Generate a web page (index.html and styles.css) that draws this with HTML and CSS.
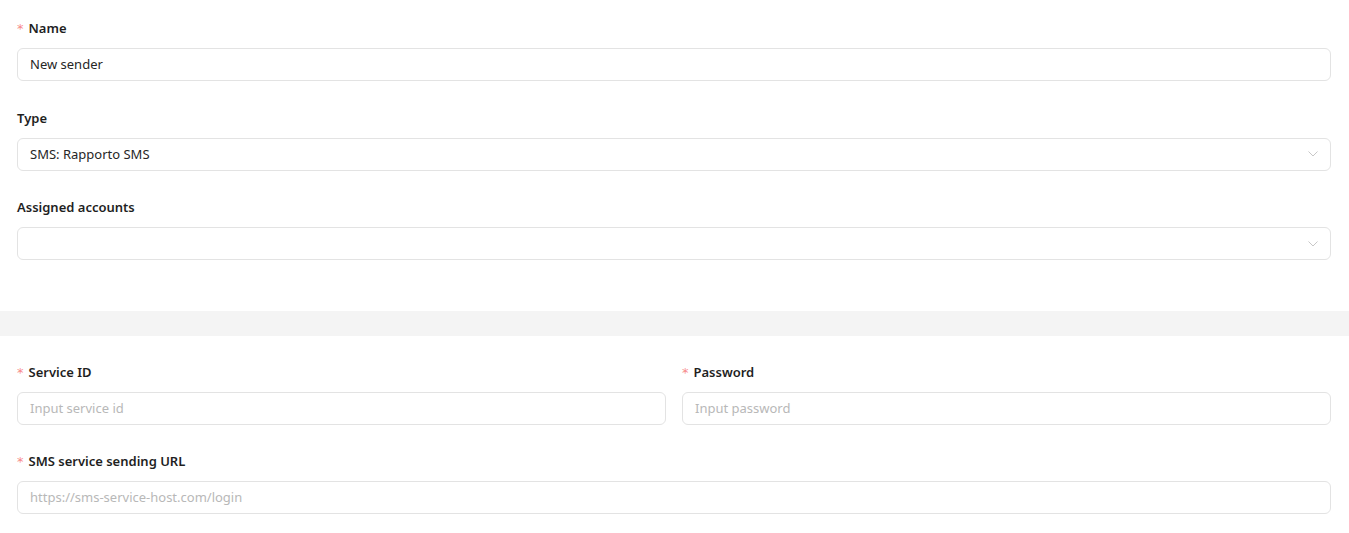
FILE: index.html
```html
<!DOCTYPE html>
<html>
<head>
<meta charset="utf-8">
<link rel="stylesheet" href="styles.css">
</head>
<body>
<form class="form">
  <section class="section section-top">
    <div class="field">
      <label class="label"><span class="req">*</span>Name</label>
      <div class="input"><span class="value">New sender</span></div>
    </div>
    <div class="field">
      <label class="label">Type</label>
      <div class="input select"><span class="value">SMS: Rapporto SMS</span>
        <svg class="chev" width="12" height="8" viewBox="0 0 12 8"><path d="M1.5 1.5 L6 6 L10.5 1.5" fill="none" stroke="#c8c8c8" stroke-width="1"/></svg>
      </div>
    </div>
    <div class="field last">
      <label class="label">Assigned accounts</label>
      <div class="input select"><span class="value"></span>
        <svg class="chev" width="12" height="8" viewBox="0 0 12 8"><path d="M1.5 1.5 L6 6 L10.5 1.5" fill="none" stroke="#c8c8c8" stroke-width="1"/></svg>
      </div>
    </div>
  </section>
  <div class="divider"></div>
  <section class="section section-bottom">
    <div class="row">
      <div class="field">
        <label class="label"><span class="req">*</span>Service ID</label>
        <div class="input"><span class="placeholder">Input service id</span></div>
      </div>
      <div class="field">
        <label class="label"><span class="req">*</span>Password</label>
        <div class="input"><span class="placeholder">Input password</span></div>
      </div>
    </div>
    <div class="field last">
      <label class="label"><span class="req">*</span>SMS service sending URL</label>
      <div class="input"><span class="placeholder">https://sms-service-host.com/login</span></div>
    </div>
  </section>
</form>
</body>
</html>
```
FILE: styles.css
```css
html, body {
  margin: 0;
  padding: 0;
  background: #fff;
}
body {
  font-family: "Noto Sans", "Open Sans", sans-serif;
  font-size: 13px;
  color: #262626;
}
.form {
  display: flex;
  flex-direction: column;
}
.section {
  padding: 0 18px 0 17px;
}
.section-top {
  padding-top: 18px;
  padding-bottom: 51px;
}
.section-bottom {
  padding-top: 26px;
  padding-bottom: 19px;
}
.divider {
  height: 25px;
  background: #f4f4f4;
}
.field {
  display: flex;
  flex-direction: column;
  gap: 10px;
  margin-bottom: 26.5px;
}
.row .field {
  margin-bottom: 26px;
}
.field.last {
  margin-bottom: 0;
}
.row {
  display: grid;
  grid-template-columns: 1fr 1fr;
  column-gap: 16px;
}
.label {
  display: flex;
  align-items: center;
  height: 20px;
  line-height: 20px;
  font-weight: 600;
  font-size: 13px;
  color: #1f1f1f;
}
.req {
  color: #f78a8a;
  font-weight: 400;
  font-size: 13px;
  margin-right: 5px;
  font-family: "DejaVu Sans", sans-serif;
  position: relative;
  top: 1px;
}
.input {
  box-sizing: border-box;
  height: 33px;
  border: 1px solid #e3e3e3;
  border-radius: 6px;
  display: flex;
  align-items: center;
  padding: 0 11px 0 12px;
  background: #fff;
}
.value {
  color: #262626;
  flex: 1;
  position: relative;
  top: -0.5px;
}
.placeholder {
  color: #b8b8b8;
  flex: 1;
  position: relative;
  top: -0.5px;
}
.chev {
  flex: none;
}
```
